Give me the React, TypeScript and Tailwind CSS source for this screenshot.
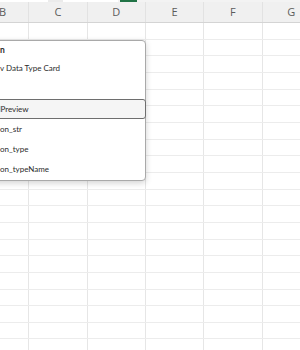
import React from "react";

const cols = ["B", "C", "D", "E", "F", "G"];

export default function App() {
  const rows = Array.from({ length: 20 }, (_, i) => i);
  return (
    <div
      className="relative w-[300px] h-[350px] overflow-hidden bg-white"
      style={{ fontFamily: '"Open Sans", "Liberation Sans", sans-serif' }}
    >
      {/* top strip */}
      <div className="flex h-[2px] bg-[#f3f3f3]">
        <div className="w-[48px] bg-white" />
        <div className="w-[15px] bg-[#ebebeb]" />
        <div className="w-[55px] bg-white" />
        <div className="ml-[2px] w-[17px] bg-[#217346]" />
      </div>

      {/* column header */}
      <div className="grid grid-cols-[29.3px_repeat(5,58.33px)] h-[21px] bg-[#f0f0f0] border-b border-[#d4d4d4]">
        {cols.map((c, i) => (
          <div
            key={c}
            className={`flex items-center text-[11px] text-[#5c5c5c] border-r border-[#e2e2e2] ${
              i === 0 ? "justify-start" : "justify-center"
            }`}
          >
            {i === 0 ? <span className="-ml-[1px]">{c}</span> : c}
          </div>
        ))}
      </div>

      {/* grid body */}
      <div className="flex flex-col">
        {rows.map((r) => (
          <div
            key={r}
            className="grid grid-cols-[29.3px_repeat(5,58.33px)] h-[16.67px] border-b border-[#ececec]"
          >
            {cols.map((c) => (
              <div key={c} className="border-r border-[#e6e6e6]" />
            ))}
          </div>
        ))}
      </div>

      {/* data type card popup */}
      <div
        className="absolute left-[-10px] top-[40px] w-[156px] h-[141px] rounded-[4px] border border-[#a9a9a9] bg-white shadow-[0_2px_6px_rgba(0,0,0,0.18)] text-[8px] text-[#2b2b2b]"
        style={{ fontFamily: 'Lato, "Liberation Sans", sans-serif' }}
      >
        <div className="pl-[9px] h-[18px] flex items-center font-bold text-[8.5px]">n</div>
        <div className="pl-[9px] h-[18px] flex items-center">v Data Type Card</div>
        <div className="mt-[22px] mr-[-1px] h-[20px] flex items-center pl-[4px] rounded-[3px] border border-[#6e6e6e] bg-[#f5f5f5]">
          dPreview
        </div>
        <div className="h-[20px] flex items-center pl-[9px]">on_str</div>
        <div className="h-[20px] flex items-center pl-[9px]">on_type</div>
        <div className="h-[20px] flex items-center pl-[9px]">on_typeName</div>
      </div>
    </div>
  );
}
